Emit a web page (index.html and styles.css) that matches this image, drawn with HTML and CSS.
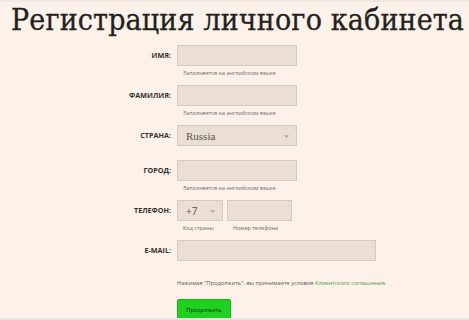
FILE: index.html
```html
<!DOCTYPE html>
<html lang="ru">
<head>
<meta charset="utf-8">
<link rel="stylesheet" href="styles.css">
</head>
<body>
<div class="page">
  <h1 class="title">Регистрация личного кабинета</h1>
  <form class="form">
    <div class="row">
      <label class="label">ИМЯ:</label>
      <div class="field">
        <div class="input w-main"></div>
        <div class="hint">Заполняется на английском языке</div>
      </div>
    </div>
    <div class="row">
      <label class="label">ФАМИЛИЯ:</label>
      <div class="field">
        <div class="input w-main"></div>
        <div class="hint">Заполняется на английском языке</div>
      </div>
    </div>
    <div class="row row-nohint">
      <label class="label">СТРАНА:</label>
      <div class="field">
        <div class="input w-main select"><span class="sel-text serif">Russia</span><span class="caret"></span></div>
      </div>
    </div>
    <div class="row">
      <label class="label">ГОРОД:</label>
      <div class="field">
        <div class="input w-main"></div>
        <div class="hint">Заполняется на английском языке</div>
      </div>
    </div>
    <div class="row">
      <label class="label">ТЕЛЕФОН:</label>
      <div class="field phone">
        <div class="phone-col">
          <div class="input w-code select"><span class="sel-text">+7</span><span class="caret"></span></div>
          <div class="hint">Код страны</div>
        </div>
        <div class="phone-col">
          <div class="input w-num"></div>
          <div class="hint">Номер телефона</div>
        </div>
      </div>
    </div>
    <div class="row row-nohint">
      <label class="label">E-MAIL:</label>
      <div class="field">
        <div class="input w-email"></div>
      </div>
    </div>
    <div class="terms">Нажимая "Продолжить", вы принимаете условия <span class="link">Клиентского соглашения</span>.</div>
    <div class="actions"><button type="button" class="btn">Продолжить</button></div>
  </form>
</div>
<div class="footer-strip"></div>
</body>
</html>
```
FILE: styles.css
```css
html, body {
  margin: 0;
  padding: 0;
  background: #fcf2e9;
}
body {
  width: 469px;
  height: 320px;
  overflow: hidden;
  position: relative;
  font-family: "Open Sans", "Liberation Sans", sans-serif;
}
.page {
  height: 318px;
  border-top: 2px solid #efe9e3;
  box-sizing: border-box;
}
.title {
  margin: 0;
  padding-left: 11px;
  font-family: "DejaVu Serif Condensed", "DejaVu Serif", serif;
  font-stretch: condensed;
  font-weight: normal;
  font-size: 30px;
  line-height: 36px;
  letter-spacing: 0.15px;
  color: #24221e;
  white-space: nowrap;
  -webkit-text-stroke: 0.3px #24221e;
}
.form {
  margin-top: 7px;
}
.row {
  display: flex;
  align-items: flex-start;
  height: 40px;
}
.row-nohint {
  height: 35px;
}
.label {
  width: 171px;
  padding-right: 6px;
  text-align: right;
  font-size: 7.2px;
  font-weight: 700;
  color: #35312c;
  line-height: 21px;
  box-sizing: content-box;
}
.field {
  display: flex;
  flex-direction: column;
}
.input {
  height: 21px;
  box-sizing: border-box;
  background: #e9dfd5;
  border: 1px solid #d5cabe;
  position: relative;
}
.w-main { width: 120px; }
.w-code { width: 46px; }
.w-num { width: 65px; }
.w-email { width: 199px; }
.select {
  display: flex;
  align-items: center;
  padding-left: 8px;
}
.sel-text {
  font-size: 10px;
  color: #5a554f;
}
.serif {
  font-family: "Liberation Serif", serif;
  font-size: 11px;
}
.caret {
  position: absolute;
  right: 8px;
  top: 8px;
  width: 2px;
  height: 2px;
  border-right: 1px solid #9a9288;
  border-bottom: 1px solid #9a9288;
  transform: rotate(45deg);
}
.hint {
  margin-top: 3px;
  padding-left: 6px;
  font-size: 5.5px;
  line-height: 8px;
  color: #6e6962;
}
.phone {
  flex-direction: row;
  gap: 4px;
}
.phone-col {
  display: flex;
  flex-direction: column;
}
.terms {
  margin-left: 177px;
  margin-top: 4px;
  font-size: 5.7px;
  line-height: 8px;
  color: #5e5852;
  white-space: nowrap;
}
.link {
  color: #4d9a3a;
}
.actions {
  margin-left: 177px;
  margin-top: 12px;
}
.btn {
  width: 54px;
  height: 21px;
  padding: 0;
  border: 1px solid #1bb51b;
  border-radius: 2px;
  background: #1fd21f;
  color: #1a1a1a;
  font-family: "Open Sans", "Liberation Sans", sans-serif;
  font-size: 5.8px;
  display: block;
}
.footer-strip {
  height: 2px;
  background: #e6e4e2;
}
```
